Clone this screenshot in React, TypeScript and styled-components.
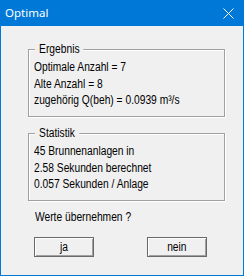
import React from "react";
import styled, { createGlobalStyle } from "styled-components";

const GlobalStyle = createGlobalStyle`
  html, body { margin: 0; padding: 0; background: #f0f0f0; }
  * { box-sizing: border-box; }
`;

const Window = styled.div`
  width: 244px;
  height: 276px;
  display: flex;
  flex-direction: column;
  background: #f0f0f0;
  border: 1px solid #0078d7;
  border-top: none;
  font-family: "Liberation Sans", Arial, sans-serif;
  font-size: 12.5px;
  color: #000;
`;

const TitleBar = styled.div`
  height: 26px;
  flex: none;
  display: flex;
  align-items: center;
  justify-content: space-between;
  padding: 0 9px 0 4px;
  background: #0078d7;
  color: #fff;
  font-family: "Noto Sans", "Open Sans", sans-serif;
  font-size: 11.5px;
`;

const Title = styled.span`
  line-height: 16px;
`;

const CloseIcon = styled.svg`
  display: block;
  width: 11px;
  height: 11px;
`;

const Body = styled.div`
  display: flex;
  flex-direction: column;
  padding: 23px 0 0 27px;
`;

const GroupBox = styled.div`
  position: relative;
  width: 197px;
  height: 68px;
  border: 1px solid #a0a0a0;
  box-shadow: inset 1px 1px 0 #fff, 1px 1px 0 #fff;
  padding: 9px 0 0 5px;
  & + & {
    margin-top: 16px;
  }
`;

const Legend = styled.span`
  position: absolute;
  left: 6px;
  top: -9px;
  padding: 0 5px;
  line-height: 17px;
  background: #f0f0f0;
  white-space: nowrap;
  transform: scaleX(0.82);
  transform-origin: left center;
`;

const Line = styled.div`
  line-height: 16.5px;
  white-space: nowrap;
  transform: scaleX(0.82);
  transform-origin: left center;
`;

const Question = styled.div`
  margin: 8px 0 0 7px;
  line-height: 16px;
  white-space: nowrap;
  transform: scaleX(0.82);
  transform-origin: left center;
`;

const ButtonRow = styled.div`
  display: flex;
  gap: 53px;
  margin: 12px 0 0 6px;
`;

const Button = styled.button`
  width: 60px;
  height: 20px;
  padding: 0;
  background: #f0f0f0;
  border: 1px solid #696969;
  box-shadow: inset 1px 1px 0 #fff, inset -1px -1px 0 #a0a0a0;
  font: inherit;
  color: #000;
  line-height: 16px;
`;

const ButtonLabel = styled.span`
  display: inline-block;
  transform: scaleX(0.82);
`;

export default function App() {
  return (
    <>
      <GlobalStyle />
      <Window>
        <TitleBar>
          <Title>Optimal</Title>
          <CloseIcon viewBox="0 0 11 11">
            <path d="M0.5 0.5 L10.5 10.5 M10.5 0.5 L0.5 10.5" stroke="#fff" strokeWidth="1" fill="none" />
          </CloseIcon>
        </TitleBar>
        <Body>
          <GroupBox>
            <Legend>Ergebnis</Legend>
            <Line>Optimale Anzahl = 7</Line>
            <Line>Alte Anzahl = 8</Line>
            <Line>zugehörig Q(beh) = 0.0939 m³/s</Line>
          </GroupBox>
          <GroupBox>
            <Legend>Statistik</Legend>
            <Line>45 Brunnenanlagen in</Line>
            <Line>2.58 Sekunden berechnet</Line>
            <Line>0.057 Sekunden / Anlage</Line>
          </GroupBox>
          <Question>Werte übernehmen ?</Question>
          <ButtonRow>
            <Button><ButtonLabel>ja</ButtonLabel></Button>
            <Button><ButtonLabel>nein</ButtonLabel></Button>
          </ButtonRow>
        </Body>
      </Window>
    </>
  );
}
